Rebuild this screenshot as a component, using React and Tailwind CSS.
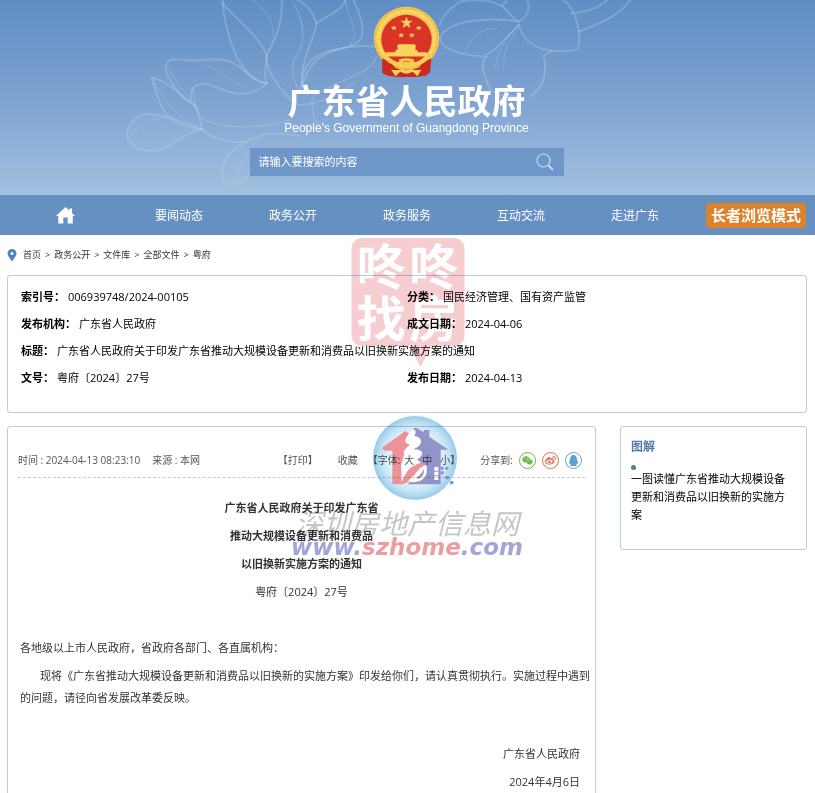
import { FaQq, FaWeibo, FaWeixin } from "react-icons/fa";
import { FaLocationDot } from "react-icons/fa6";

const navItems = ["要闻动态", "政务公开", "政务服务", "互动交流", "走进广东"];
const crumbs = ["首页", "政务公开", "文件库", "全部文件", "粤府"];

const shareLinks = [
  { label: "微信", Icon: FaWeixin, className: "border-[#6fb548] text-[#6fb548]" },
  { label: "微博", Icon: FaWeibo, className: "border-[#e0674f] text-[#e0674f]" },
  { label: "QQ", Icon: FaQq, className: "border-[#5f9fd6] text-[#5f9fd6]" },
];

function Flower() {
  return (
    <svg
      className="absolute inset-0 h-full w-full"
      viewBox="0 0 2445 585"
      preserveAspectRatio="xMidYMin slice"
      fill="none"
      stroke="#bcd6f0"
      strokeOpacity="0.3"
      strokeWidth="6"
      strokeLinecap="round"
      aria-hidden="true"
    >
      <path d="M605 386C560 378 520 342 440 342C395 348 372 395 385 420C400 450 450 458 480 450C530 430 560 395 605 388" fill="#bcd6f0" fillOpacity="0.06" />
      <path d="M388 410C420 370 450 355 500 352" strokeWidth="3" />
      <path d="M455 235C470 270 480 335 515 360C540 375 570 385 605 388" />
      <path d="M455 232C500 245 530 270 560 300C605 320 590 350 610 390" />
      <path d="M460 238C480 290 530 350 590 382" strokeWidth="3" />
      <path d="M590 320C540 290 500 240 496 200C500 170 540 178 580 182C640 175 690 170 730 210C760 240 780 250 800 250" />
      <path d="M500 195C520 240 550 270 575 300M610 192C650 205 690 250 740 262" strokeWidth="3" />
      <path d="M572 300C570 270 580 250 620 252C660 262 700 290 750 278C780 270 790 260 800 250" />
      <path d="M578 270C590 310 580 330 605 355C660 385 780 390 870 360" strokeWidth="4" />
      <path d="M668 0C670 60 690 130 715 180C740 220 770 245 800 250" />
      <path d="M668 10C700 50 780 110 800 165C800 200 790 230 800 250" />
      <path d="M845 0C850 60 830 110 800 165C795 205 830 260 885 312" />
      <path d="M760 0C810 40 825 80 820 125" strokeWidth="3" />
      <path d="M893 0C930 20 940 40 948 70C950 110 900 170 905 260" />
      <path d="M880 10C925 80 910 150 880 180C875 220 880 250 900 270" strokeWidth="4" />
      <path d="M1037 0C1030 25 1000 40 948 70" />
      <path d="M1060 0C1080 40 1095 80 1085 110C1075 140 1040 140 1000 150C940 165 905 190 905 260" />
      <path d="M1035 0C1050 60 1080 100 1050 135" strokeWidth="3" />
      <path d="M1150 145C1080 130 1000 140 950 180C920 210 910 240 905 265" />
      <path d="M1130 170C1120 220 1000 245 940 290C930 320 940 360 960 380" strokeWidth="4" />
      <path d="M885 312C930 320 990 300 1060 250" strokeWidth="4" />
      <path d="M605 388C640 420 700 430 740 425C800 390 850 400 900 408" />
      <path d="M740 425C690 450 655 490 670 540C690 565 725 550 745 525" />
      <path d="M790 410C740 440 720 500 700 550" strokeWidth="3" />
      <g transform="translate(1221 0)">
        <path d="M300 0L285 18C250 0 210 -5 160 5C120 30 100 60 98 78" />
        <path d="M335 65C240 50 130 60 100 110C95 150 170 165 230 170C270 150 300 110 335 75" />
        <path d="M270 85C220 85 190 110 175 160" strokeWidth="3" />
        <path d="M240 170C215 190 230 220 250 270C270 285 300 290 340 290" />
        <path d="M335 75C300 110 270 150 265 205M330 90C300 130 290 160 290 200" strokeWidth="3" />
        <path d="M335 75C345 110 370 140 420 150C450 155 490 155 512 148C525 110 510 30 470 0" />
        <path d="M435 152L410 168C425 230 400 270 370 290" />
        <path d="M285 18C300 30 310 50 335 65C365 50 370 20 360 0" />
        <path d="M493 40C550 35 580 20 600 0M515 95C580 70 640 45 670 0" />
      </g>
    </svg>
  );
}

function Emblem() {
  return (
    <svg className="h-[72px] w-[67px]" viewBox="68 15 202 216" role="img" aria-label="国徽">
      <path d="M98 160L96 216Q120 232 170 228Q220 232 240 214L242 160Z" fill="#c9281f" />
      <ellipse cx="169" cy="112" rx="99" ry="95" fill="#f3c94f" />
      <ellipse cx="169" cy="112" rx="94" ry="90" fill="none" stroke="#e6ae3c" strokeWidth="3" strokeDasharray="7 5" />
      <ellipse cx="169" cy="112" rx="85" ry="82" fill="none" stroke="#fcdc72" strokeWidth="7" strokeDasharray="10 3" />
      <ellipse cx="169" cy="115" rx="76" ry="74" fill="#d93425" />
      <path d="M96 172L120 184L140 206L116 226L96 216ZM244 172L220 184L200 206L224 226L240 214Z" fill="#cb2a20" />
      <path d="M169 46l4.500 13h14l-11 8 4 14-11.500-8-11.500 8 4-14-11-8h14z" fill="#f9d45c" />
      <g fill="#f9d45c">
        <path d="M131 72l2 6h7l-5 4 2 6-6-4-6 4 2-6-5-4h7z" />
        <path d="M206 72l2 6h7l-5 4 2 6-6-4-6 4 2-6-5-4h7z" />
        <path d="M153 94l2 6h7l-5 4 2 6-6-4-6 4 2-6-5-4h7z" />
        <path d="M185 94l2 6h7l-5 4 2 6-6-4-6 4 2-6-5-4h7z" />
        <path d="M144 130h50l4 8h-58zM142 138h54v10h-54zM136 147h66v7h-66zM108 154h122l4 13H104z" />
      </g>
      <path d="M100 160Q116 190 146 188Q158 178 169 178Q182 178 192 188Q222 190 240 160" fill="none" stroke="#f5cd55" strokeWidth="9" />
      <path d="M146 176Q169 168 192 176L184 198Q169 204 154 198Z" fill="#f5cd55" />
      <path d="M158 184Q169 178 180 184" fill="none" stroke="#d98f2e" strokeWidth="4" />
      <path d="M122 206Q146 210 156 204Q169 212 182 204Q192 210 214 206L202 226L188 213Q169 224 150 213L136 226Z" fill="#f7cf57" />
    </svg>
  );
}

function MetaItem({ label, wide, children }) {
  return (
    <div className={wide ? "col-span-2 flex gap-[3px]" : "flex gap-[3px]"}>
      <dt className="font-bold">{label}：</dt>
      <dd>{children}</dd>
    </div>
  );
}

// 咚咚找房 stamp
function Stamp() {
  return (
    <div className="pointer-events-none absolute top-[3px] left-1/2 w-[113px] -translate-x-1/2 mix-blend-multiply" aria-hidden="true">
      <div className="grid h-[108px] grid-cols-2 content-center justify-items-center rounded-[10px] bg-[#f6cdd0] px-1 text-[49px] leading-[52px] font-bold text-white">
        <span>咚</span>
        <span>咚</span>
        <span>找</span>
        <span>房</span>
      </div>
      <svg className="mx-auto ml-[58px] h-[22px] w-[22px]" viewBox="0 0 22 22">
        <path d="M0 0H22L11 21Z" fill="#f6cdd0" />
      </svg>
    </div>
  );
}

function SiteMark() {
  return (
    <div className="pointer-events-none absolute -top-[10px] left-[400px] flex w-[240px] -translate-x-1/2 flex-col items-center mix-blend-multiply" aria-hidden="true">
      <svg className="ml-4 h-[84px] w-[84px] overflow-visible" viewBox="8 12 252 252">
        <defs>
          <radialGradient id="globe">
            <stop offset="0" stopColor="#ffffff" />
            <stop offset="0.5" stopColor="#f0f8fd" />
            <stop offset="0.8" stopColor="#c6e4f5" />
            <stop offset="1" stopColor="#96cbea" />
          </radialGradient>
        </defs>
        <circle cx="134" cy="138" r="126" fill="url(#globe)" />
        <path d="M34 108L105 57L118 66L108 84L122 104L100 132L92 160L94 217H66V116H44Z" fill="#ee9299" />
        <path d="M128 50L138 47L160 61V54H177V74L234 113H211V217H112L128 200L160 170L150 150L120 130L130 106L150 92L124 74Z" fill="#9294c9" />
        <path
          d="M128 52Q142 56 132 72Q154 74 152 92Q148 104 128 112Q154 112 156 124Q154 138 124 152Q110 160 112 182L106 188Q92 182 94 160Q98 146 116 134Q98 132 100 120Q104 108 120 98Q100 94 106 80Q114 64 128 52Z"
          fill="#ffffff"
        />
        <path d="M106 186Q116 162 158 150Q170 156 158 164L136 184L130 204L96 217H90Z" fill="#ee9299" />
        <path d="M120 200Q134 190 146 172Q158 160 168 160Q176 196 146 208Q118 214 114 206Z" fill="#ffffff" />
        <path d="M136 198Q154 188 160 170Q164 192 146 200Z" fill="#9294c9" />
        <path d="M192 165h12v11h-12zM192 179h12v11h-12zM192 193h12v11h-12z" fill="#ffffff" />
        <path d="M211 164h9v9h-9zM225 164h9v9h-9zM211 178h9v9h-9zM225 192h10v10h-10zM239 207h10v10h-10z" fill="#9294c9" />
      </svg>
      <p className="mt-[7px] text-[28px] leading-8 whitespace-nowrap text-[#c6c6c6] italic">深圳房地产信息网</p>
      <p className="-mt-1 font-['DejaVu_Sans'] text-[23px] leading-6 font-bold whitespace-nowrap text-[#a3a4d9] italic">
        www.<span className="text-[#ec9da2]">szhome</span>.com
      </p>
    </div>
  );
}

export default function App() {
  return (
    <div className="h-screen overflow-hidden bg-white font-['Open_Sans','Noto_Sans_CJK_SC',sans-serif] text-[11px] text-black">
      <header>
        <div className="relative bg-linear-to-b from-[#608dc3] via-[#7ea3d1] to-[#a2c1e0] pt-1.5 pb-[19px]">
          <Flower />
          <div className="relative flex flex-col items-center pr-0.5 text-white">
            <Emblem />
            <h1 className="font-['Noto_Sans_CJK_SC'] text-[34px] leading-[44px] font-bold">广东省人民政府</h1>
            <p className="font-['Liberation_Sans'] text-xs leading-3">People's Government of Guangdong Province</p>
            <form className="mt-[14px] flex h-7 w-[314px] items-center bg-[#6f96c8] pr-[10px] pl-[9px]">
              <input
                type="text"
                aria-label="搜索"
                placeholder="请输入要搜索的内容"
                className="min-w-0 flex-1 text-[11px] text-white outline-none placeholder:text-white"
              />
              <button type="button" aria-label="搜索">
                <svg className="h-[18px] w-[18px]" viewBox="0 0 18 18" fill="none" stroke="#c3dbf3">
                  <circle cx="7.500" cy="7.500" r="6.500" strokeWidth="1.200" />
                  <path d="M12 12L17 17" strokeWidth="1.800" />
                </svg>
              </button>
            </form>
          </div>
        </div>

        <nav className="grid h-10 grid-cols-7 items-center justify-items-center bg-[#6690c2] pt-px pr-[9px] pl-2 text-xs text-white">
          <a href="#home" aria-label="首页">
            <svg className="h-[17px] w-[19px]" viewBox="0 0 19 17" fill="currentColor">
              <path d="M9.500 0L13.500 3.600V1.500H16V6L19 9H16.800V16.500H11.700V10.500H7.300V16.500H2.300V9H0Z" />
            </svg>
          </a>
          {navItems.map((item) => (
            <a key={item} href="#nav">{item}</a>
          ))}
          <button type="button" className="h-[25px] w-[100px] justify-self-end rounded bg-[#dd822c] text-[15px] leading-[25px] font-bold whitespace-nowrap">
            长者浏览模式
          </button>
        </nav>
      </header>

      <main className="relative pr-2 pl-[7px]">
        <nav className="flex h-10 items-center gap-1 text-[9px] text-[#333]">
          <FaLocationDot className="mr-0.5 h-3 w-[10px] text-[#4f83c2]" />
          {crumbs.map((crumb, i) => (
            <span key={crumb} className="flex gap-1">
              {i > 0 && <span>&gt;</span>}
              <a href="#crumb">{crumb}</a>
            </span>
          ))}
        </nav>

        <dl className="grid grid-cols-[386px_1fr] rounded-[3px] border border-[#b9ccdd] px-[13px] pt-[7px] pb-[21px] leading-[27px]">
          <MetaItem label="索引号">006939748/2024-00105</MetaItem>
          <MetaItem label="分类">国民经济管理、国有资产监管</MetaItem>
          <MetaItem label="发布机构">广东省人民政府</MetaItem>
          <MetaItem label="成文日期">2024-04-06</MetaItem>
          <MetaItem label="标题" wide>广东省人民政府关于印发广东省推动大规模设备更新和消费品以旧换新实施方案的通知</MetaItem>
          <MetaItem label="文号">粤府〔2024〕27号</MetaItem>
          <MetaItem label="发布日期">2024-04-13</MetaItem>
        </dl>

        <div className="relative mt-[13px] flex items-start gap-6">
          <article className="min-w-0 flex-1 rounded-t-[3px] border border-[#b9ccdd] pb-10 text-[#333]">
            <div className="mx-[10px] flex h-[51px] items-center border-b border-dashed border-[#c8c8c8] pt-[17px] pr-[3px] text-[10px] whitespace-nowrap text-[#555]">
              <span>时间 : 2024-04-13 08:23:10</span>
              <span className="ml-3">来源 : 本网</span>
              <button type="button" className="ml-auto">【打印】</button>
              <button type="button" className="ml-5">收藏</button>
              <span className="ml-[10px] flex">
                <span>【字体:</span>
                <button type="button" className="ml-1">大</button>
                <button type="button" className="ml-2">中</button>
                <button type="button" className="ml-2">小</button>
                <span>】</span>
              </span>
              <span className="ml-5 flex items-center gap-[6px]">
                <span>分享到:</span>
                {shareLinks.map(({ label, Icon, className }) => (
                  <a key={label} href="#share" aria-label={label} className={`flex h-[17px] w-[17px] items-center justify-center rounded-full border ${className}`}>
                    <Icon className="h-[11px] w-[11px]" />
                  </a>
                ))}
              </span>
            </div>

            <div className="pt-4 text-center leading-7">
              <h2 className="font-bold">
                广东省人民政府关于印发广东省
                <br />
                推动大规模设备更新和消费品
                <br />
                以旧换新实施方案的通知
              </h2>
              <p>粤府〔2024〕27号</p>
            </div>

            <div className="mt-7 pr-[5px] pl-3 leading-7">
              <p>各地级以上市人民政府，省政府各部门、各直属机构：</p>
              <p className="py-[3px] indent-5 leading-[22px]">
                现将《广东省推动大规模设备更新和消费品以旧换新的实施方案》印发给你们，请认真贯彻执行。实施过程中遇到的问题，请径向省发展改革委反映。
              </p>
            </div>
            <div className="mt-7 pr-[15px] text-right leading-7">
              <p>广东省人民政府</p>
              <p>2024年4月6日</p>
            </div>
          </article>

          <aside className="w-[187px] rounded-[3px] border border-[#b9ccdd] pt-[10px] pr-5 pb-[25px] pl-[10px]">
            <h2 className="text-xs leading-5 font-bold text-[#5279ab]">图解</h2>
            <ul>
              <li className="pt-2 leading-[18px] before:block before:h-[5px] before:w-[5px] before:rounded-full before:bg-[#5279ab]">
                <a href="#interpretation">一图读懂广东省推动大规模设备更新和消费品以旧换新的实施方案</a>
              </li>
            </ul>
          </aside>
          <SiteMark />
        </div>
        <Stamp />
      </main>
    </div>
  );
}
